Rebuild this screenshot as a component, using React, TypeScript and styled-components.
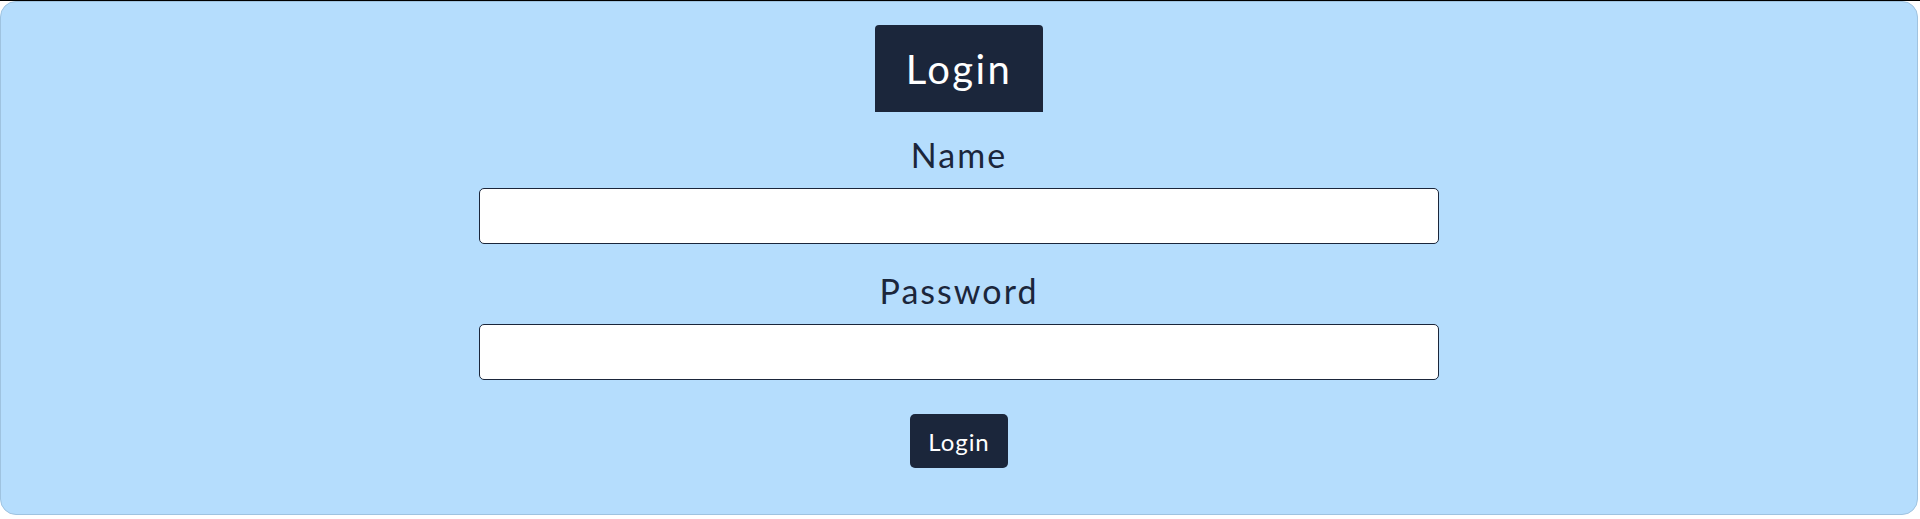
import React from "react";
import styled, { createGlobalStyle } from "styled-components";

const GlobalStyle = createGlobalStyle`
  html, body { margin: 0; padding: 0; background: #ffffff; }
  body { font-family: Lato, "Noto Sans", sans-serif; }
  * { box-sizing: border-box; }
`;

const TopRule = styled.div`
  height: 1px;
  background: #000000;
`;

const Panel = styled.main`
  height: 514px;
  margin-right: 2px;
  background: #b5ddfd;
  border: 1px solid #9fc3e0;
  border-radius: 16px;
  padding-top: 23px;
  display: flex;
  flex-direction: column;
  align-items: center;
`;

const Title = styled.h1`
  margin: 0;
  height: 87px;
  width: 168px;
  display: flex;
  align-items: center;
  justify-content: center;
  background: #1b263b;
  color: #ffffff;
  font-size: 40px;
  font-weight: 400;
  letter-spacing: 0.06em;
  border-radius: 4px 4px 0 0;
`;

const Form = styled.form`
  display: flex;
  flex-direction: column;
  align-items: center;
  width: 960px;
  margin-top: 23px;
`;

const Field = styled.div<{ $gapAfter: number }>`
  display: flex;
  flex-direction: column;
  align-items: center;
  width: 100%;
  gap: 13px;
  margin-bottom: ${(p) => p.$gapAfter}px;
`;

const Label = styled.label`
  font-size: 34px;
  line-height: 40px;
  letter-spacing: 0.06em;
  color: #1b263b;
`;

const Input = styled.input`
  width: 100%;
  height: 56px;
  background: #ffffff;
  border: 1px solid #1b263b;
  border-radius: 5px;
  padding: 0 12px;
  font-size: 20px;
  font-family: inherit;
  outline: none;
`;

const Button = styled.button`
  height: 54px;
  width: 98px;
  background: #1b263b;
  color: #ffffff;
  border: none;
  border-radius: 5px;
  font-family: inherit;
  font-size: 24px;
  letter-spacing: 0.04em;
  cursor: pointer;
`;

export default function App() {
  return (
    <>
      <GlobalStyle />
      <TopRule />
      <Panel>
        <Title>Login</Title>
        <Form onSubmit={(e) => e.preventDefault()}>
          <Field $gapAfter={27}>
            <Label htmlFor="name">Name</Label>
            <Input id="name" type="text" />
          </Field>
          <Field $gapAfter={34}>
            <Label htmlFor="password">Password</Label>
            <Input id="password" type="password" />
          </Field>
          <Button type="submit">Login</Button>
        </Form>
      </Panel>
    </>
  );
}
